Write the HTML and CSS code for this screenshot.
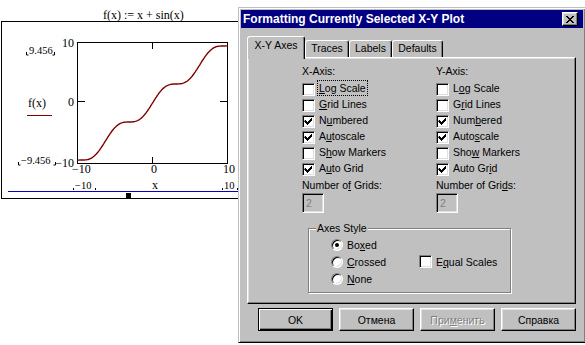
FILE: index.html
```html
<!DOCTYPE html>
<html lang="en">
<head>
  <meta charset="UTF-8" />
  <title>Formatting Currently Selected X-Y Plot</title>
  <link rel="stylesheet" href="styles.css">
</head>
<body>
  <svg class="plot" width="240" height="200" viewBox="0 0 240 200">
    <path class="frame" d="M1 21.5H240M1.5 21V199M1 198.5H240" />
    <text class="title" x="103" y="19">f(x) := x + sin(x)</text>
    <rect class="plotbox" x="77.5" y="42.5" width="150" height="121" />
    <path class="tick" d="M152.5 43v6M152.5 157v6M78 101.5h7M220 101.5h7" />
    <polyline id="trace" class="trace" points="" />

    <text x="74" y="47" text-anchor="end">10</text>
    <text x="74" y="106" text-anchor="end">0</text>
    <text x="74" y="167" text-anchor="end">−10</text>

    <text class="small" x="29" y="54">9.456</text>
    <path class="mark" d="M26.5 52v3h2M54.5 52v3h-2" />
    <text class="small" x="21" y="164">−9.456</text>
    <path class="mark" d="M18.5 162v3h2M55.5 162v3h-2" />

    <text x="28" y="107">f(x)</text>
    <path class="legend" d="M27 115.5h25" />

    <text x="72" y="173">−10</text>
    <text x="151" y="173">0</text>
    <text x="223" y="173">10</text>

    <text class="small" x="75" y="189">−10</text>
    <path class="mark" d="M73.5 188v2M95.5 188v2" />
    <text x="152" y="189">x</text>
    <text class="small" x="224" y="189">10</text>
    <path class="mark" d="M222.5 188v2M237.5 188v2" />

    <path class="bar" d="M8 191.5H240" />
    <rect x="126" y="193" width="5" height="5" />
  </svg>

  <div class="dialog">
    <div class="titlebar">
      <span class="title">Formatting Currently Selected X-Y Plot</span>
      <span class="close">
        <svg width="8" height="7" viewBox="0 0 8 7"><path d="M0 0h2v1h-2zM6 0h2v1h-2zM1 1h2v1h-2zM5 1h2v1h-2zM2 2h4v1h-4zM3 3h2v1h-2zM2 4h4v1h-4zM1 5h2v1h-2zM5 5h2v1h-2zM0 6h2v1h-2zM6 6h2v1h-2z" /></svg>
      </span>
    </div>

    <div class="content">
      <div class="tabs">
        <span class="tab active" style="width:58px">X-Y Axes</span>
        <span class="tab" style="width:44px">Traces</span>
        <span class="tab" style="width:43px">Labels</span>
        <span class="tab" style="width:51px">Defaults</span>
      </div>

      <div class="panel">
        <div class="axes">
          <div class="axis">
            <div class="cap">X-Axis:</div>
            <div class="check"><span class="box"></span><span class="text focus"><u>L</u>og Scale</span></div>
            <div class="check"><span class="box"></span><span class="text"><u>G</u>rid Lines</span></div>
            <div class="check"><span class="box"><svg viewBox="1 1 11 11"><path d="M3 5h1v1h1v1h1v-1h1v-1h1v-1h1v-1h1v3h-1v1h-1v1h-1v1h-1v1h-1v-1h-1v-1h-1v-1h-1z" /></svg></span><span class="text">N<u>u</u>mbered</span></div>
            <div class="check"><span class="box"><svg viewBox="1 1 11 11"><path d="M3 5h1v1h1v1h1v-1h1v-1h1v-1h1v-1h1v3h-1v1h-1v1h-1v1h-1v1h-1v-1h-1v-1h-1v-1h-1z" /></svg></span><span class="text">A<u>u</u>toscale</span></div>
            <div class="check"><span class="box"></span><span class="text">S<u>h</u>ow Markers</span></div>
            <div class="check"><span class="box"><svg viewBox="1 1 11 11"><path d="M3 5h1v1h1v1h1v-1h1v-1h1v-1h1v-1h1v3h-1v1h-1v1h-1v1h-1v1h-1v-1h-1v-1h-1v-1h-1z" /></svg></span><span class="text">A<u>u</u>to Grid</span></div>
            <div class="cap grids">Number o<u>f</u> Grids:</div>
            <div class="field">2</div>
          </div>
          <div class="axis">
            <div class="cap">Y-Axis:</div>
            <div class="check"><span class="box"></span><span class="text">L<u>o</u>g Scale</span></div>
            <div class="check"><span class="box"></span><span class="text">G<u>r</u>id Lines</span></div>
            <div class="check"><span class="box"><svg viewBox="1 1 11 11"><path d="M3 5h1v1h1v1h1v-1h1v-1h1v-1h1v-1h1v3h-1v1h-1v1h-1v1h-1v1h-1v-1h-1v-1h-1v-1h-1z" /></svg></span><span class="text">Num<u>b</u>ered</span></div>
            <div class="check"><span class="box"><svg viewBox="1 1 11 11"><path d="M3 5h1v1h1v1h1v-1h1v-1h1v-1h1v-1h1v3h-1v1h-1v1h-1v1h-1v1h-1v-1h-1v-1h-1v-1h-1z" /></svg></span><span class="text">Auto<u>s</u>cale</span></div>
            <div class="check"><span class="box"></span><span class="text">Sho<u>w</u> Markers</span></div>
            <div class="check"><span class="box"><svg viewBox="1 1 11 11"><path d="M3 5h1v1h1v1h1v-1h1v-1h1v-1h1v-1h1v3h-1v1h-1v1h-1v1h-1v1h-1v-1h-1v-1h-1v-1h-1z" /></svg></span><span class="text">Auto Gr<u>i</u>d</span></div>
            <div class="cap grids">Number of Gri<u>d</u>s:</div>
            <div class="field">2</div>
          </div>
        </div>

        <fieldset class="group">
          <legend>Axes Style</legend>
          <div class="options">
            <div class="option"><span class="radio on"></span><span class="text">Bo<u>x</u>ed</span></div>
            <div class="option"><span class="radio"></span><span class="text"><u>C</u>rossed</span></div>
            <div class="option"><span class="radio"></span><span class="text"><u>N</u>one</span></div>
            <div class="check equal"><span class="box"></span><span class="text">E<u>q</u>ual Scales</span></div>
          </div>
        </fieldset>
      </div>

      <div class="buttons">
        <span class="btn default">OK</span>
        <span class="btn">Отмена</span>
        <span class="btn disabled">При<u>м</u>енить</span>
        <span class="btn">Справка</span>
      </div>
    </div>
  </div>

  <script>
    // y = x + sin(x), plotted over -10..10 in the box 77.5..227.5 x 42.5..163.5
    const pts = [];
    for (let i = 0; i <= 200; i++) {
      const x = -10 + i * 0.1;
      const y = x + Math.sin(x);
      pts.push((77.5 + (x + 10) * 7.5).toFixed(1) + ',' + (163.5 - (y + 10) * 6.05).toFixed(1));
    }
    document.getElementById('trace').setAttribute('points', pts.join(' '));
  </script>
</body>
</html>
```

FILE: styles.css
```css
* {
  box-sizing: border-box;
}
body {
  margin: 0;
  width: 585px;
  height: 345px;
  background: #fff;
  position: relative;
  overflow: hidden;
  font-family: "Liberation Sans", Arial, sans-serif;
  font-size: 10.5px;
  color: #000;
}

/* mathcad plot region */
.plot {
  position: absolute;
  left: 0;
  top: 0;
}
.plot text {
  font-family: "Liberation Serif", "Times New Roman", serif;
  font-size: 12px;
  fill: #000;
}
.plot text.small {
  font-size: 10.5px;
}
.plot .frame,
.plot .tick,
.plot .mark,
.plot .plotbox {
  fill: none;
  stroke: #000;
  stroke-width: 1;
}
.plot .trace {
  fill: none;
  stroke: #800000;
  stroke-width: 1.4;
}
.plot .legend {
  stroke: #800000;
  stroke-width: 1;
}
.plot .bar {
  stroke: #0000c8;
  stroke-width: 1;
}

/* dialog window */
.dialog {
  position: absolute;
  left: 238px;
  top: 7px;
  width: 348px;
  height: 336px;
  background: #c0c0c0;
  border: 1px solid;
  border-color: #c0c0c0 #000 #000 #c0c0c0;
  box-shadow: inset 1px 1px #fff, inset -1px -1px #808080;
  padding: 2px;
}

.titlebar {
  height: 18px;
  background: #000080;
  color: #fff;
  display: flex;
  align-items: center;
  justify-content: space-between;
  padding: 0 5px 0 2px;
}
.titlebar .title {
  font-weight: bold;
  font-size: 12px;
  line-height: 18px;
  white-space: nowrap;
}
.close {
  width: 16px;
  height: 14px;
  background: #c0c0c0;
  border: 1px solid;
  border-color: #fff #000 #000 #fff;
  box-shadow: inset -1px -1px #808080, inset 1px 1px #dfdfdf;
  display: flex;
  align-items: center;
  justify-content: center;
}
.close svg {
  display: block;
  fill: #000;
}

.content {
  padding: 0 7px 0 6px;
}

.tabs {
  display: flex;
  align-items: flex-end;
  height: 21px;
  margin-top: 8px;
}
.tab {
  position: relative;
  height: 17px;
  border: 1px solid;
  border-bottom: none;
  border-color: #fff #000 transparent #fff;
  border-radius: 3px 3px 0 0;
  box-shadow: inset -1px 0 #808080;
  text-align: center;
  line-height: 14px;
  white-space: nowrap;
}
.tab.active {
  height: 23px;
  margin-bottom: -2px;
  padding-top: 1px;
  background: #c0c0c0;
  z-index: 1;
}

.panel {
  height: 247px;
  border: 1px solid;
  border-color: #fff #000 #000 #fff;
  box-shadow: inset -1px -1px #808080, inset 1px 1px #dfdfdf;
  padding: 5px 0 0 54px;
}

.axes {
  display: grid;
  grid-template-columns: 134px 134px;
}
.cap {
  line-height: 16px;
  margin-bottom: 3px;
  white-space: nowrap;
}
.cap.grids {
  line-height: 14px;
  margin-bottom: 1px;
}

.check,
.option {
  display: flex;
  align-items: flex-start;
  height: 16px;
  white-space: nowrap;
}
.check .text,
.option .text {
  line-height: 12px;
}
.box {
  width: 13px;
  height: 13px;
  margin: 1px 4px 0 0;
  background: #fff;
  border: 1px solid;
  border-color: #808080 #fff #fff #808080;
  box-shadow: inset 1px 1px #000, inset -1px -1px #dfdfdf;
  flex: none;
}
.box svg {
  display: block;
  width: 11px;
  height: 11px;
  fill: #000;
}
.focus {
  outline: 1px dotted #000;
  outline-offset: 1px;
}

.field {
  width: 22px;
  height: 20px;
  border: 1px solid;
  border-color: #808080 #fff #fff #808080;
  box-shadow: inset 1px 1px #000, inset -1px -1px #dfdfdf;
  color: #808080;
  line-height: 18px;
  padding-left: 3px;
}

.group {
  width: 203px;
  margin: 9px 0 0 6px;
  padding: 2px 0 5px 7px;
  border: 1px solid #808080;
  box-shadow: inset 1px 1px #fff, 1px 1px #fff;
}
.group legend {
  padding: 0 1px;
  line-height: 12px;
  background: #c0c0c0;
}
.options {
  display: grid;
  grid-template-columns: 88px auto;
  grid-template-rows: repeat(3, 17px);
  grid-auto-flow: column;
  margin-left: 15px;
}
.option,
.options .check {
  height: 17px;
  align-items: center;
}
.options .box {
  margin-top: 0;
}
.equal {
  grid-column: 2;
  grid-row: 2;
}
.radio {
  width: 12px;
  height: 12px;
  margin-right: 4px;
  border-radius: 50%;
  background: #fff;
  border: 1px solid;
  border-color: #808080 #fff #fff #808080;
  box-shadow: inset 1px 1px #000, inset -1px -1px #dfdfdf;
  flex: none;
  display: flex;
  align-items: center;
  justify-content: center;
}
.radio.on::after {
  content: '';
  width: 4px;
  height: 4px;
  border-radius: 50%;
  background: #000;
}

.buttons {
  display: flex;
  justify-content: flex-end;
  gap: 6px;
  margin-top: 4px;
}
.btn {
  width: 75px;
  height: 23px;
  border: 1px solid;
  border-color: #fff #000 #000 #fff;
  box-shadow: inset -1px -1px #808080, inset 1px 1px #dfdfdf;
  display: flex;
  align-items: center;
  justify-content: center;
  white-space: nowrap;
}
.btn.default {
  border-color: #000;
  box-shadow: inset 1px 1px #fff, inset -1px -1px #000, inset -2px -2px #808080;
}
.btn.disabled {
  color: #808080;
  text-shadow: 1px 1px #fff;
}
```
